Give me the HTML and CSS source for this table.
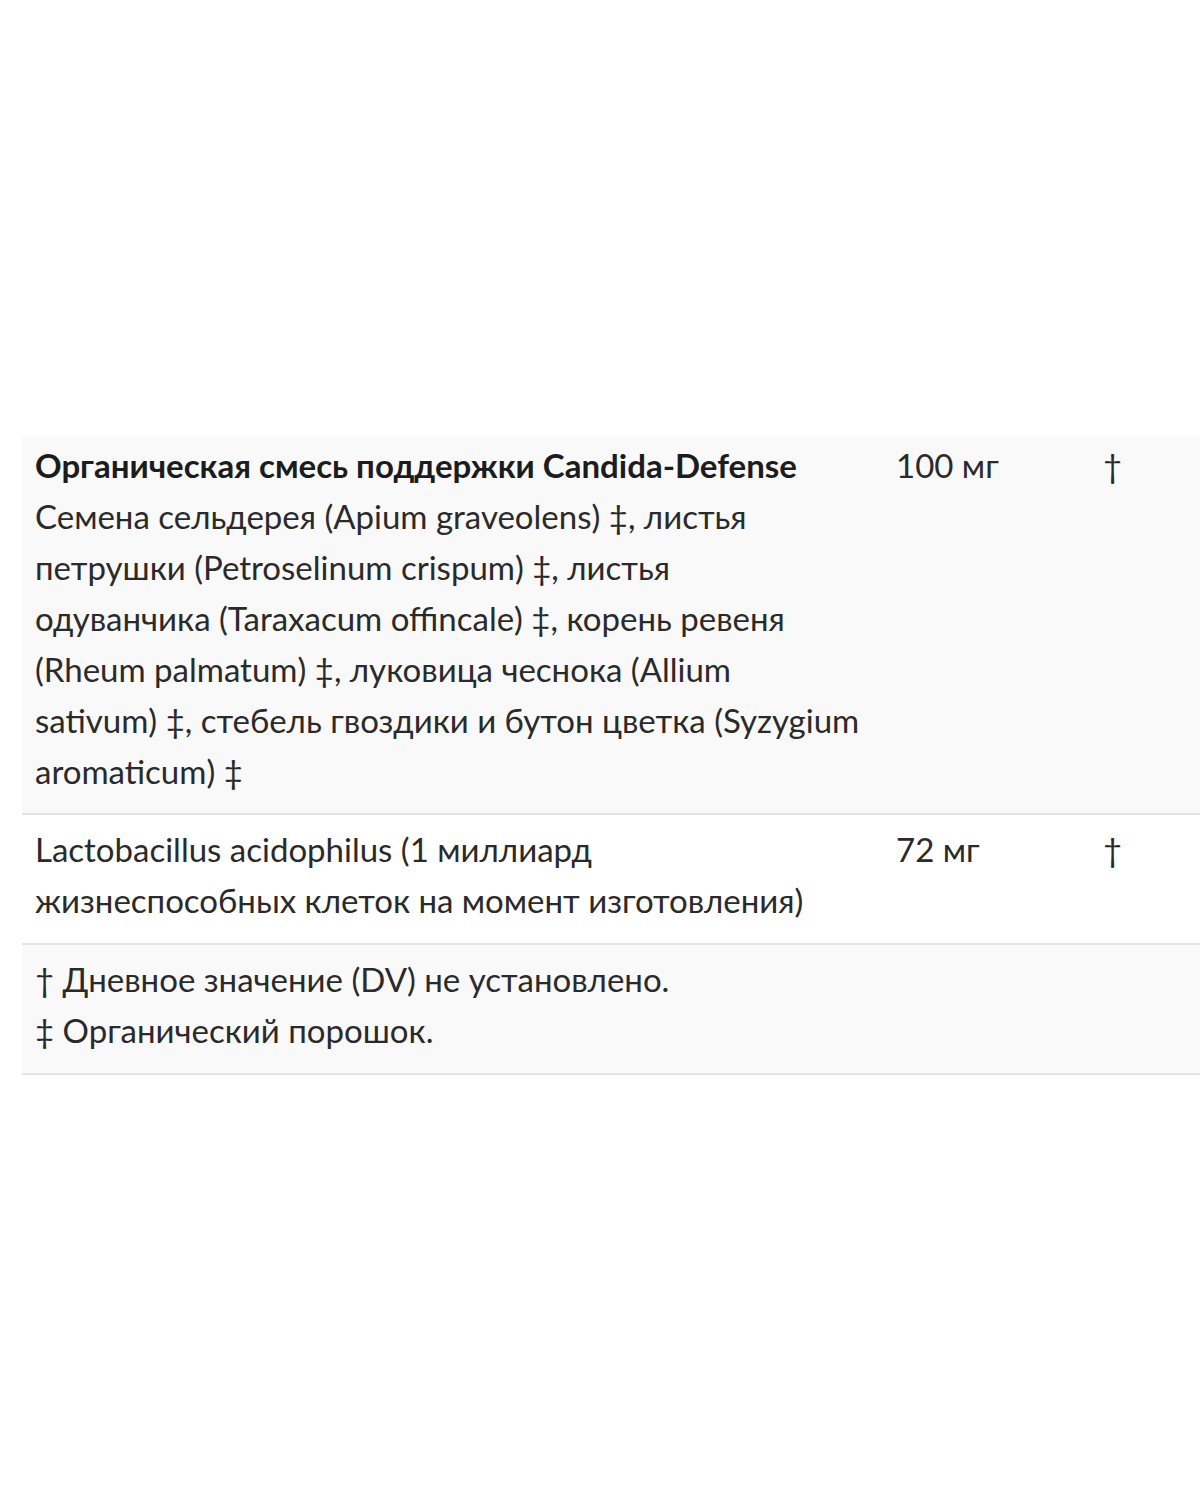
FILE: index.html
```html
<!DOCTYPE html>
<html lang="ru">
<head>
<meta charset="utf-8">
<title>Состав</title>
<link rel="stylesheet" href="styles.css">
</head>
<body>
<div class="page">
  <table class="facts">
    <colgroup>
      <col class="c-name">
      <col class="c-amount">
      <col class="c-dv">
    </colgroup>
    <tbody>
      <tr class="row row-shaded row-first">
        <td class="name"><strong class="title">Органическая смесь поддержки Candida-Defense</strong><br>Семена сельдерея (Apium graveolens) ‡, листья<br>петрушки (Petroselinum crispum) ‡, листья<br>одуванчика (Taraxacum offincale) ‡, корень ревеня<br>(Rheum palmatum) ‡, луковица чеснока (Allium<br>sativum) ‡, стебель гвоздики и бутон цветка (Syzygium<br>aromaticum) ‡</td>
        <td class="amount">100 мг</td>
        <td class="dv">†</td>
      </tr>
      <tr class="row row-second">
        <td class="name">Lactobacillus acidophilus (1 миллиард<br>жизнеспособных клеток на момент изготовления)</td>
        <td class="amount">72 мг</td>
        <td class="dv">†</td>
      </tr>
      <tr class="row row-shaded row-notes">
        <td class="notes" colspan="3">† Дневное значение (DV) не установлено.<br>‡ Органический порошок.</td>
      </tr>
    </tbody>
  </table>
</div>
</body>
</html>
```
FILE: styles.css
```css
html, body {
  margin: 0;
  padding: 0;
  background: #ffffff;
  overflow: hidden;
}

.page {
  padding: 437px 0 0 22px;
}

.facts {
  width: 1178px;
  border-collapse: collapse;
  table-layout: fixed;
  font-family: "Lato", "Noto Sans", "Liberation Sans", sans-serif;
  font-size: 33px;
  line-height: 51px;
  color: #2a2a2a;
}

.c-name { width: 861px; }
.c-amount { width: 207px; }
.c-dv { width: auto; }

.row td {
  vertical-align: top;
  padding: 9px 13px 17px 13px;
  border-bottom: 2px solid #e4e4e4;
  white-space: nowrap;
}

.row-first td {
  padding-top: 3px;
  padding-bottom: 16px;
}

.row-shaded {
  background: #f9f9f9;
}

.title {
  font-weight: 700;
  color: #1c1c1c;
}

.dv {
  padding-left: 10px;
}
```
